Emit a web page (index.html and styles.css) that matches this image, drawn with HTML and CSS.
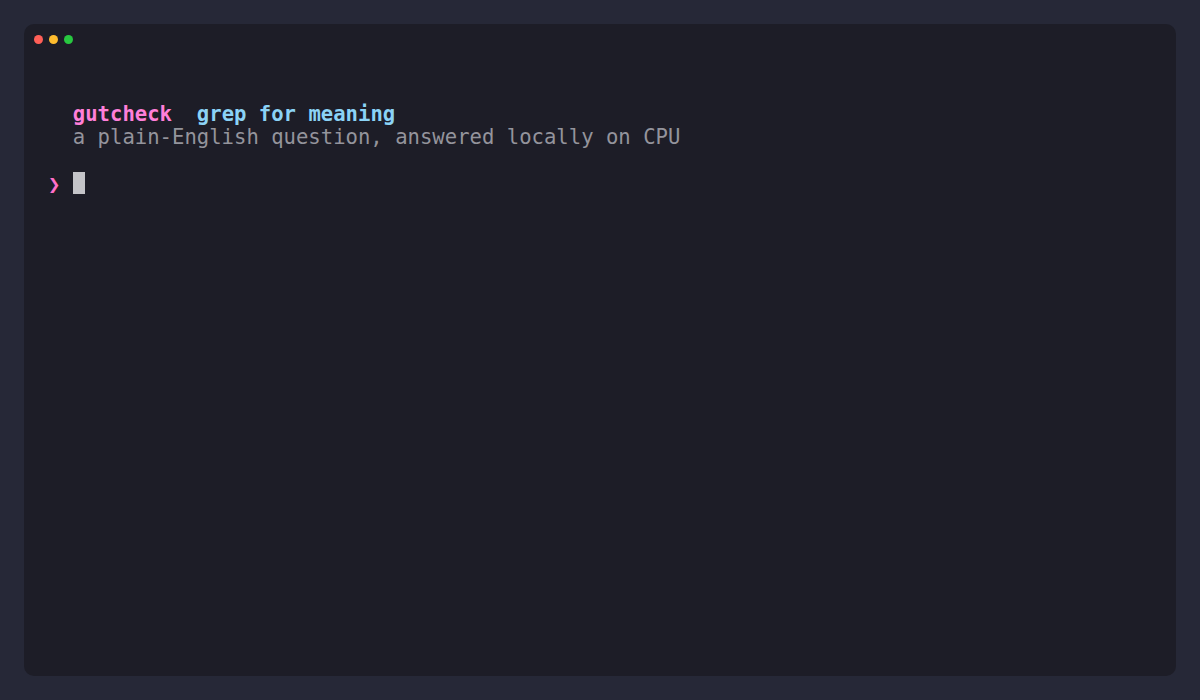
FILE: index.html
```html
<!DOCTYPE html>
<html>
<head>
<meta charset="utf-8">
<link rel="stylesheet" href="styles.css">
</head>
<body>
<div class="window">
  <div class="titlebar">
    <span class="dot red"></span>
    <span class="dot yellow"></span>
    <span class="dot green"></span>
  </div>
  <div class="term">
    <div class="line">  <span class="brand">gutcheck</span>  <span class="tag">grep for meaning</span></div>
    <div class="line muted">  a plain-English question, answered locally on CPU</div>
    <div class="line"> </div>
    <div class="line"><span class="prompt">❯</span> <span class="cursor"> </span></div>
  </div>
</div>
</body>
</html>
```
FILE: styles.css
```css
html, body {
  margin: 0;
  padding: 0;
  background: #262837;
  width: 1200px;
  height: 700px;
  overflow: hidden;
}
body {
  padding: 24px;
  box-sizing: border-box;
}
.window {
  width: 1152px;
  height: 652px;
  background: #1d1d27;
  border-radius: 10px;
  box-sizing: border-box;
}
.titlebar {
  display: flex;
  gap: 6px;
  padding: 11px 0 0 10px;
  height: 30px;
  box-sizing: border-box;
}
.dot {
  width: 9px;
  height: 9px;
  border-radius: 50%;
}
.red { background: #ff5f57; }
.yellow { background: #febc2e; }
.green { background: #28c840; }
.term {
  padding: 49px 24px 0 24px;
  font-family: "DejaVu Sans Mono", monospace;
  font-size: 20.6px;
  line-height: 23px;
  color: #d0d0d8;
}
.line {
  height: 23px;
  white-space: pre;
}
.brand { color: #ff7fd9; font-weight: bold; }
.tag { color: #8bd3f6; font-weight: bold; }
.muted { color: #94949c; }
.prompt { color: #ff6fc8; }
.cursor {
  display: inline-block;
  width: 12px;
  height: 22px;
  background: #c4c4c8;
  vertical-align: 1px;
}
```
